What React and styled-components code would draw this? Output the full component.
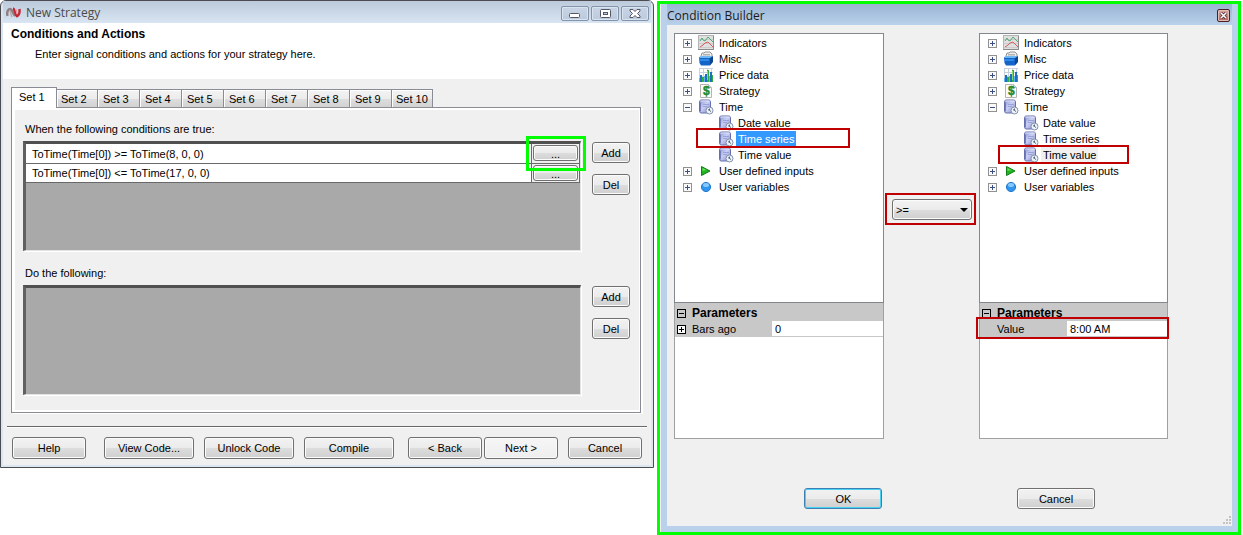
import React from "react";
import styled, { createGlobalStyle, css } from "styled-components";

const GlobalStyle = createGlobalStyle`
  * { box-sizing: border-box; }
  body {
    margin: 0;
    background: #fff;
    color: #000;
    font: 11px/16px "Liberation Sans", Arial, sans-serif;
  }
  button, input, select { font: inherit; color: inherit; margin: 0; }
  h1, h2, p, ul { margin: 0; padding: 0; }
`;

const Desktop = styled.main`
  display: grid;
  grid-template-columns: minmax(0, 654fr) minmax(0, 584fr);
  align-items: start;
  gap: 3px;
  padding-right: 2px;
`;

/* ---------- shared controls ---------- */

const PushButton = styled.button`
  width: ${(p) => (p.$width ? `${p.$width}px` : "auto")};
  height: ${(p) => p.$height || 21}px;
  padding: 0;
  border: 1px solid #707070;
  border-radius: 3px;
  background: linear-gradient(#f2f2f2, #ebebeb 50%, #dddddd 51%, #cfcfcf);
  box-shadow: inset 0 0 0 1px #fbfbfb;
  line-height: 16px;
  white-space: nowrap;
  ${(p) => p.$flat && css`background: linear-gradient(#f6f6f6, #eeeeee);`}
  ${(p) =>
    p.$primary &&
    css`
      border-color: #3c7fb1;
      box-shadow: inset 0 0 0 1px #48d0f5;
    `}
`;

const Callout = styled.span`
  position: absolute;
  top: ${(p) => p.$top}px;
  left: ${(p) => p.$left}px;
  right: ${(p) => p.$right}px;
  bottom: ${(p) => p.$bottom}px;
  z-index: 2;
  border: ${(p) => (p.$green ? "3px solid #00ff00" : "2px solid #c00000")};
  pointer-events: none;
`;

/* ---------- strategy wizard ---------- */

const WizardWindow = styled.section`
  border: 1px solid #4c4c50;
  border-radius: 6px 6px 0 0;
  padding: 0 2px 2px;
  background: #dce6f3;
`;

const WizardTitleBar = styled.header`
  display: flex;
  align-items: center;
  gap: 5px;
  height: 22px;
  padding: 2px 2px 0 3px;
  background: linear-gradient(#bccadb, #d9e5f2);
`;

const WindowTitle = styled.h1`
  flex: 1;
  font: 12px/16px "Open Sans", sans-serif;
  color: ${(p) => p.$color || "#4a4a4a"};
`;

const CaptionButtons = styled.div`
  display: flex;
  gap: 2px;
`;

const CaptionButton = styled.button`
  display: flex;
  align-items: center;
  justify-content: center;
  width: 28px;
  height: 15px;
  padding: 0;
  border: 1px solid #8492aa;
  border-radius: 2px;
  background: linear-gradient(#c9d5e5, #bccadd);
  box-shadow: inset 0 0 0 1px #d9e4f1;
`;

const WizardIntro = styled.div`
  height: 56px;
  padding: 3px 8px;
  background: #fff;
`;

const IntroHeading = styled.h2`
  font-size: 12px;
  line-height: 16px;
`;

const IntroText = styled.p`
  padding: 4px 24px;
`;

const WizardBody = styled.div`
  padding: 8px 4px 6px;
  background: #f0f0f0;
`;

const TabStrip = styled.div`
  display: flex;
  align-items: flex-end;
  padding-left: 4px;
`;

const Tab = styled.button`
  width: 42px;
  height: 18px;
  padding: 0 5px;
  border: 1px solid #898c95;
  border-bottom: 0;
  border-left-width: ${(p) => (p.$selected ? 1 : 0)}px;
  background: linear-gradient(#f3f3f3, #ececec 50%, #dedede 51%, #d2d2d2);
  box-shadow: inset 1px 1px 0 #fff;
  text-align: left;
  white-space: nowrap;
  &:nth-child(2), &:last-child { width: 41px; padding: 0 4px; }
  ${(p) =>
    p.$selected &&
    css`
      position: relative;
      z-index: 1;
      width: 46px;
      height: 21px;
      margin-bottom: -1px;
      padding: 0 7px 2px;
      background: #fff;
    `}
`;

const TabPanel = styled.div`
  margin: 0 6px 0 4px;
  padding: 13px 10px 17px 11px;
  border: 1px solid #898c95;
  box-shadow: inset 3px 2px 0 #fff, inset -1px -2px 0 #fff, 2px 1px 0 #fff;
`;

const GroupLabel = styled.p`
  padding-left: 2px;
  line-height: 16px;
  margin-bottom: 4px;
`;

const Group = styled.div`
  display: flex;
  gap: 11px;
  & + p { margin-top: 14px; }
`;

const GroupButtons = styled.div`
  display: flex;
  flex-direction: column;
  gap: 11px;
  padding-top: 1px;
`;

const GridArea = styled.div`
  flex: 1;
  min-width: 0;
  height: 110px;
  border-style: solid;
  border-width: 3px 1px 1px 3px;
  border-color: #505050 #e3e3e3 #e3e3e3 #606060;
  background: #a9a9a9;
  box-shadow: 1px 1px 0 #fff;
`;

const ConditionTable = styled.table`
  width: 100%;
  border-collapse: collapse;
  background: #fff;
`;

const ConditionCell = styled.td`
  height: 19px;
  padding: 1px 6px 0;
  line-height: 16px;
  border-bottom: 1px solid #696969;
`;

const ActionCell = styled.td`
  position: relative;
  width: 48px;
  padding: 0 1px;
  border: solid #696969;
  border-width: 0 1px 1px;
  background: #f0f0f0;
`;

const EditButton = styled(PushButton)`
  display: block;
  width: 100%;
`;

const Footer = styled.footer`
  display: grid;
  grid-template-columns: 74fr 298fr 154fr 74fr;
  gap: 10px;
  margin-top: 13px;
  padding: 10px 5px 0;
  border-top: 1px solid #696969;
  box-shadow: inset 0 1px 0 #fff;
`;

const FooterGroup = styled.div`
  display: grid;
  grid-auto-flow: column;
  grid-auto-columns: minmax(0, 1fr);
  gap: ${(p) => p.$gap || 0}px;
  padding-left: ${(p) => p.$lead || 0}px;
`;

const conditions = [
  "ToTime(Time[0]) >= ToTime(8, 0, 0)",
  "ToTime(Time[0]) <= ToTime(17, 0, 0)",
];

function AppLogo() {
  return (
    <svg width="15" height="12" viewBox="0 0 15 12" fill="none" aria-hidden="true">
      <path d="M1.500 9C.6 5 2 2 4 2s3 5 5 7" stroke="#8f7f80" strokeWidth="2.400" />
      <path d="M4 4c1 2 1 4 2 6" stroke="#b5a9aa" strokeWidth="1.400" />
      <path d="M7 1.500C9 2 9 8 11 9.300c2-.5 3-4 2.400-7.300" stroke="#c32735" strokeWidth="2.400" />
      <path d="M10 2.500c.5 1 .5 3 1 4.500" stroke="#e09aa0" strokeWidth="1.400" />
    </svg>
  );
}

function CaptionGlyph({ kind }) {
  const line = { fill: "#fff", stroke: "#535666" };
  return (
    <svg width="12" height="11" viewBox="0 0 12 11" aria-hidden="true">
      {kind === "Minimize" && <rect x=".5" y="5.500" width="10" height="4" rx="1" {...line} />}
      {kind === "Maximize" && (
        <>
          <rect x="1.500" y="1.500" width="10" height="8" rx="1" {...line} />
          <rect x="4.500" y="4.500" width="4" height="2" fill="#c4d0e0" stroke="#535666" />
        </>
      )}
      {kind === "Close" && (
        <path
          d="M1 1.500h3l2 2 2-2h3v1.500L8.500 5.500 11 8v1.500H8l-2-2-2 2H1V8l2.500-2.500L1 3z"
          {...line}
        />
      )}
    </svg>
  );
}

function ConditionGroup({ label, rows }) {
  return (
    <>
      <GroupLabel>{label}</GroupLabel>
      <Group>
        <GridArea>
          {rows.length > 0 && (
            <ConditionTable aria-label={label}>
              <tbody>
                {rows.map((row, i) => (
                  <tr key={row}>
                    <ConditionCell>{row}</ConditionCell>
                    <ActionCell>
                      <EditButton $height={16} aria-label={`Edit ${row}`}>...</EditButton>
                      {i === 0 && <Callout $green $top={-8} $left={-6} $right={-7} $bottom={-8} />}
                    </ActionCell>
                  </tr>
                ))}
              </tbody>
            </ConditionTable>
          )}
        </GridArea>
        <GroupButtons>
          <PushButton $width={38}>Add</PushButton>
          <PushButton $width={38}>Del</PushButton>
        </GroupButtons>
      </Group>
    </>
  );
}

function StrategyWizard() {
  return (
    <WizardWindow>
      <WizardTitleBar>
        <AppLogo />
        <WindowTitle>New Strategy</WindowTitle>
        <CaptionButtons>
          {["Minimize", "Maximize", "Close"].map((kind) => (
            <CaptionButton key={kind} aria-label={kind}>
              <CaptionGlyph kind={kind} />
            </CaptionButton>
          ))}
        </CaptionButtons>
      </WizardTitleBar>
      <WizardIntro>
        <IntroHeading>Conditions and Actions</IntroHeading>
        <IntroText>Enter signal conditions and actions for your strategy here.</IntroText>
      </WizardIntro>
      <WizardBody>
        <TabStrip role="tablist">
          {Array.from({ length: 10 }, (_, i) => (
            <Tab key={i} role="tab" aria-selected={i === 0} $selected={i === 0}>
              Set {i + 1}
            </Tab>
          ))}
        </TabStrip>
        <TabPanel role="tabpanel">
          <ConditionGroup label="When the following conditions are true:" rows={conditions} />
          <ConditionGroup label="Do the following:" rows={[]} />
        </TabPanel>
        <Footer>
          <FooterGroup>
            <PushButton $height={22}>Help</PushButton>
          </FooterGroup>
          <FooterGroup $gap={10} $lead={8}>
            <PushButton $height={22}>View Code...</PushButton>
            <PushButton $height={22}>Unlock Code</PushButton>
            <PushButton $height={22}>Compile</PushButton>
          </FooterGroup>
          <FooterGroup $gap={2} $lead={4}>
            <PushButton $height={22}>&lt; Back</PushButton>
            <PushButton $height={22} $flat>Next &gt;</PushButton>
          </FooterGroup>
          <FooterGroup>
            <PushButton $height={22}>Cancel</PushButton>
          </FooterGroup>
        </Footer>
      </WizardBody>
    </WizardWindow>
  );
}

/* ---------- condition builder ---------- */

const BuilderWindow = styled.section`
  margin-top: 1px;
  border: 3px solid #00ff00;
  padding: 0 6px 6px 7px;
  background: #b9d1ea;
  box-shadow: inset 1px 0 0 #fff;
`;

const BuilderTitleBar = styled.header`
  display: flex;
  align-items: center;
  height: 21px;
  padding: 2px 2px 0 0;
  background: linear-gradient(#9ab4d2, #b9d1ea);
`;

const CloseButton = styled.button`
  display: flex;
  align-items: center;
  justify-content: center;
  width: 13px;
  height: 13px;
  padding: 0;
  border: 1px solid #4a2024;
  border-radius: 2px;
  background: linear-gradient(#dba9a4, #b4625c);
  box-shadow: inset 0 0 0 1px #e3bdb8;
`;

const BuilderBody = styled.div`
  position: relative;
  padding: 8px 64px 17px 7px;
  background: #f0f0f0;
`;

const BuilderColumns = styled.div`
  display: grid;
  grid-template-columns: 210fr 95fr 189fr;
`;

const Tree = styled.ul`
  height: 270px;
  padding: 1px 0 0 8px;
  border: 1px solid #828790;
  background: #fff;
  list-style: none;
`;

const Branch = styled.ul`
  padding-left: 35px;
  list-style: none;
`;

const TreeRow = styled.div`
  position: relative;
  display: flex;
  align-items: center;
  height: 16px;
`;

const Expander = styled.button`
  display: flex;
  width: 9px;
  height: 9px;
  margin-right: 6px;
  padding: 0;
  border: 0;
  background: none;
`;

const TreeLabel = styled.span`
  margin-left: ${(p) => (p.$child ? 2 : 3)}px;
  padding: 0 2px;
  white-space: nowrap;
  ${(p) => p.$state === "selected" && css`background: #3399ff; color: #fff;`}
  ${(p) => p.$state === "inactive" && css`background: #f0f0f0;`}
`;

const ParameterGrid = styled.div`
  height: 136px;
  border: 1px solid #a0a0a0;
  border-top: 0;
  background: #fff;
`;

const ParameterHeader = styled.div`
  display: flex;
  align-items: center;
  gap: 6px;
  height: 18px;
  padding: 2px 0 0 2px;
  background: #c8c8c8;
  font-size: 12px;
  font-weight: bold;
`;

const ParameterRow = styled.div`
  position: relative;
  display: grid;
  grid-template-columns: ${(p) => p.$columns};
  height: 16px;
  background: #c8c8c8;
`;

const ParameterName = styled.div`
  display: flex;
  align-items: center;
  gap: 6px;
  padding-left: ${(p) => (p.$indent ? 17 : 2)}px;
`;

const ParameterInput = styled.input`
  min-width: 0;
  height: 15px;
  padding: 0 3px;
  border: 0;
  border-radius: 0;
  background: #fff;
`;

const OperatorSlot = styled.div`
  position: relative;
  height: 32px;
  margin: 160px 3px 0 1px;
  padding: 6px 4px 5px 7px;
`;

const OperatorBox = styled.div`
  position: relative;
  & svg {
    position: absolute;
    right: 4px;
    top: 9px;
    pointer-events: none;
  }
`;

const OperatorSelect = styled.select`
  appearance: none;
  display: block;
  width: 100%;
  height: 21px;
  padding: 0 3px;
  border: 1px solid #707070;
  border-radius: 3px;
  background: linear-gradient(#f2f2f2, #ebebeb 50%, #dddddd 51%, #cfcfcf);
  box-shadow: inset 0 0 0 1px #fbfbfb;
`;

const DialogButtons = styled.div`
  display: grid;
  grid-template-columns: 343fr 151fr;
  margin-top: 49px;
`;

const DialogButtonCell = styled.div`
  display: flex;
  padding-left: ${(p) => p.$lead}%;
`;

const Grip = styled.svg`
  position: absolute;
  right: 1px;
  bottom: 1px;
`;

function IndicatorIcon() {
  return (
    <svg width="16" height="16" viewBox="0 0 16 16" fill="none" aria-hidden="true">
      <rect x=".5" y=".5" width="15" height="14" fill="#e0e0e0" stroke="#b4b4b4" />
      <path d="M1 4.500h14M1 8.500h14M1 12.500h14" stroke="#cdcdcd" />
      <path d="M0 14.500h15.500V1" stroke="#8a8a8a" />
      <path d="M2 6l2-3 1 2 2 1 3-4 2 2 3 3" stroke="#4fa878" />
      <path d="M2 12l3-2 2-2 3-1 2 2 3 3" stroke="#dc5c5c" />
    </svg>
  );
}

function MiscIcon() {
  return (
    <svg width="16" height="16" viewBox="0 0 16 16" aria-hidden="true">
      <path d="M3 5l1-3h2l1-1h5l2 2v4H3z" fill="#eee" stroke="#777" strokeWidth=".8" />
      <path d="M5 3.500h7M5 5h7" stroke="#999" strokeWidth=".7" />
      <path d="M1 6h11v8.500H3L1.500 12z" fill="#1264c8" />
      <path d="M1 6l3-1h11l-3 2H2z" fill="#6db7f5" />
      <path d="M12 7l3-2v6l-3 3.500z" fill="#0a4694" />
      <path d="M2 8h9v2H2z" fill="#2e8ae6" />
    </svg>
  );
}

function PriceIcon() {
  return (
    <svg width="16" height="16" viewBox="0 0 16 16" aria-hidden="true">
      <path d="M1.500 1v13M5.500 1v13M9.500 1v13M13.500 1v13M1 1.500h14M1 5.500h14M1 9.500h14" stroke="#c9d2dc" />
      <path d="M2 8h2v7H2zM7 7h2v8H7zM12 5h2v10h-2z" fill="#1d6fc4" />
      <path d="M4 10h2v5H4zM9 3h2v12H9zM14 8h1v7h-1z" fill="#2fae3c" />
      <path d="M1 11h1v4H1zM6 9h1v6H6zM11 9h1v6h-1z" fill="#5fb4f5" />
      <path d="M9 4h1v9H9z" fill="#7fdc70" />
    </svg>
  );
}

const Coin = styled.text`
  font: bold 12px "Liberation Sans", sans-serif;
  fill: #238a2d;
  stroke: #238a2d;
  stroke-width: 0.4px;
`;

function StrategyIcon() {
  return (
    <svg width="16" height="16" viewBox="0 0 16 16" aria-hidden="true">
      <path d="M2.500 1.500h8l3 3v10h-11z" fill="#fbfbfb" stroke="#b4b4b4" />
      <path d="M10.500 1.500v3h3" fill="#ddd" stroke="#b4b4b4" />
      <Coin x="5" y="12">$</Coin>
    </svg>
  );
}

function TimeIcon() {
  return (
    <svg width="16" height="16" viewBox="0 0 16 16" aria-hidden="true">
      <defs>
        <linearGradient id="drum" x1="0" y1="0" x2="1" y2="1">
          <stop offset="0" stopColor="#8c94cc" />
          <stop offset="0.450" stopColor="#c9cff2" />
          <stop offset="1" stopColor="#7d87c8" />
        </linearGradient>
      </defs>
      <path d="M1.500 2.500l1-1.500h9l1 1.500v10l-1 1.500h-9l-1-1.500z" fill="url(#drum)" stroke="#666fae" />
      <path d="M2.500 2h9" stroke="#e4e8fb" />
      <path d="M2.500 3.500v9" stroke="#737cbb" />
      <path d="M5 5.500h6M5 7.500h4" stroke="#9aa2dc" />
      <circle cx="11.500" cy="11.500" r="3.500" fill="#eef3fa" stroke="#8292ac" />
      <path d="M11.500 9.500v2l-1.500-1M11.500 11.500l1.500 1" stroke="#5a6580" fill="none" />
    </svg>
  );
}

function InputsIcon() {
  return (
    <svg width="16" height="16" viewBox="0 0 16 16" aria-hidden="true">
      <path d="M3.500 3.500v9l8.500-4.500z" fill="#20b520" stroke="#117c18" />
      <path d="M4.500 5v3l4-1z" fill="#63dd55" />
    </svg>
  );
}

function VariablesIcon() {
  return (
    <svg width="16" height="16" viewBox="0 0 16 16" aria-hidden="true">
      <circle cx="8" cy="8" r="4.600" fill="#2f95ee" stroke="#2379cd" />
      <ellipse cx="8" cy="6" rx="3" ry="2" fill="#86c9ff" />
    </svg>
  );
}

function ToggleGlyph({ open, dark }) {
  const ink = dark ? "#000" : "#3c4f88";
  return (
    <svg width="9" height="9" viewBox="0 0 9 9" aria-hidden="true">
      <rect x=".5" y=".5" width="8" height="8" fill={dark && open ? "none" : "#fafafa"} stroke={dark ? "#000" : "#919191"} />
      <path d={open ? "M2 4.500h5" : "M2 4.500h5M4.500 2v5"} stroke={ink} />
    </svg>
  );
}

const treeItems = [
  { label: "Indicators", Icon: IndicatorIcon },
  { label: "Misc", Icon: MiscIcon },
  { label: "Price data", Icon: PriceIcon },
  { label: "Strategy", Icon: StrategyIcon },
  { label: "Time", Icon: TimeIcon, children: ["Date value", "Time series", "Time value"] },
  { label: "User defined inputs", Icon: InputsIcon },
  { label: "User variables", Icon: VariablesIcon },
];

function SeriesTree({ name, picked, state, callout }) {
  return (
    <Tree aria-label={name}>
      {treeItems.map(({ label, Icon, children }) => (
        <li key={label}>
          <TreeRow>
            <Expander aria-label={`${children ? "Collapse" : "Expand"} ${label}`}>
              <ToggleGlyph open={Boolean(children)} />
            </Expander>
            <Icon />
            <TreeLabel>{label}</TreeLabel>
          </TreeRow>
          {children && (
            <Branch>
              {children.map((child) => (
                <TreeRow as="li" key={child}>
                  <TimeIcon />
                  <TreeLabel $child $state={child === picked ? state : undefined}>{child}</TreeLabel>
                  {child === picked && callout}
                </TreeRow>
              ))}
            </Branch>
          )}
        </li>
      ))}
    </Tree>
  );
}

function Parameters({ id, name, value, expandable, columns, callout }) {
  return (
    <ParameterGrid>
      <ParameterHeader>
        <ToggleGlyph open dark />
        Parameters
      </ParameterHeader>
      <ParameterRow $columns={columns}>
        <ParameterName $indent={!expandable}>
          {expandable && <ToggleGlyph dark />}
          <label htmlFor={id}>{name}</label>
        </ParameterName>
        <ParameterInput id={id} defaultValue={value} />
        {callout}
      </ParameterRow>
    </ParameterGrid>
  );
}

function ConditionBuilder() {
  return (
    <BuilderWindow>
      <BuilderTitleBar>
        <WindowTitle $color="#1a1a1a">Condition Builder</WindowTitle>
        <CloseButton aria-label="Close">
          <svg width="7" height="7" viewBox="0 0 7 7" aria-hidden="true">
            <path d="M1 1l5 5M6 1L1 6" stroke="#4b2b38" strokeWidth="3" />
            <path d="M1 1l5 5M6 1L1 6" stroke="#fff" strokeWidth="1.500" />
          </svg>
        </CloseButton>
      </BuilderTitleBar>
      <BuilderBody>
        <BuilderColumns>
          <div>
            <SeriesTree
              name="Left operand"
              picked="Time series"
              state="selected"
              callout={<Callout $top={-3} $left={-22} $right={33} $bottom={-1} />}
            />
            <Parameters id="bars-ago" name="Bars ago" value="0" expandable columns="97fr 111fr" />
          </div>
          <OperatorSlot>
            <OperatorBox>
              <OperatorSelect aria-label="Operator" defaultValue=">=">
                <option>&gt;=</option>
                <option>&lt;=</option>
              </OperatorSelect>
              <svg width="8" height="4" viewBox="0 0 8 4" aria-hidden="true">
                <path d="M0 0h8L4 4z" />
              </svg>
            </OperatorBox>
            <Callout $top={0} $left={0} $right={0} $bottom={0} />
          </OperatorSlot>
          <div>
            <SeriesTree
              name="Right operand"
              picked="Time value"
              state="inactive"
              callout={<Callout $top={-2} $left={-25} $right={38} $bottom={-1} />}
            />
            <Parameters
              id="time-value"
              name="Value"
              value="8:00 AM"
              columns="87fr 100fr"
              callout={<Callout $top={-4} $left={-4} $right={-2} $bottom={-2} />}
            />
          </div>
        </BuilderColumns>
        <DialogButtons>
          <DialogButtonCell $lead={38}>
            <PushButton $width={78} $primary>OK</PushButton>
          </DialogButtonCell>
          <DialogButtonCell $lead={0}>
            <PushButton $width={78}>Cancel</PushButton>
          </DialogButtonCell>
        </DialogButtons>
        <Grip width="9" height="9" viewBox="0 0 9 9" aria-hidden="true">
          <path d="M7 0h2v2H7zM4 3h2v2H4zM7 3h2v2H7zM1 6h2v2H1zM4 6h2v2H4zM7 6h2v2H7z" fill="#c3c3c3" />
        </Grip>
      </BuilderBody>
    </BuilderWindow>
  );
}

export default function App() {
  return (
    <>
      <GlobalStyle />
      <Desktop>
        <StrategyWizard />
        <ConditionBuilder />
      </Desktop>
    </>
  );
}
